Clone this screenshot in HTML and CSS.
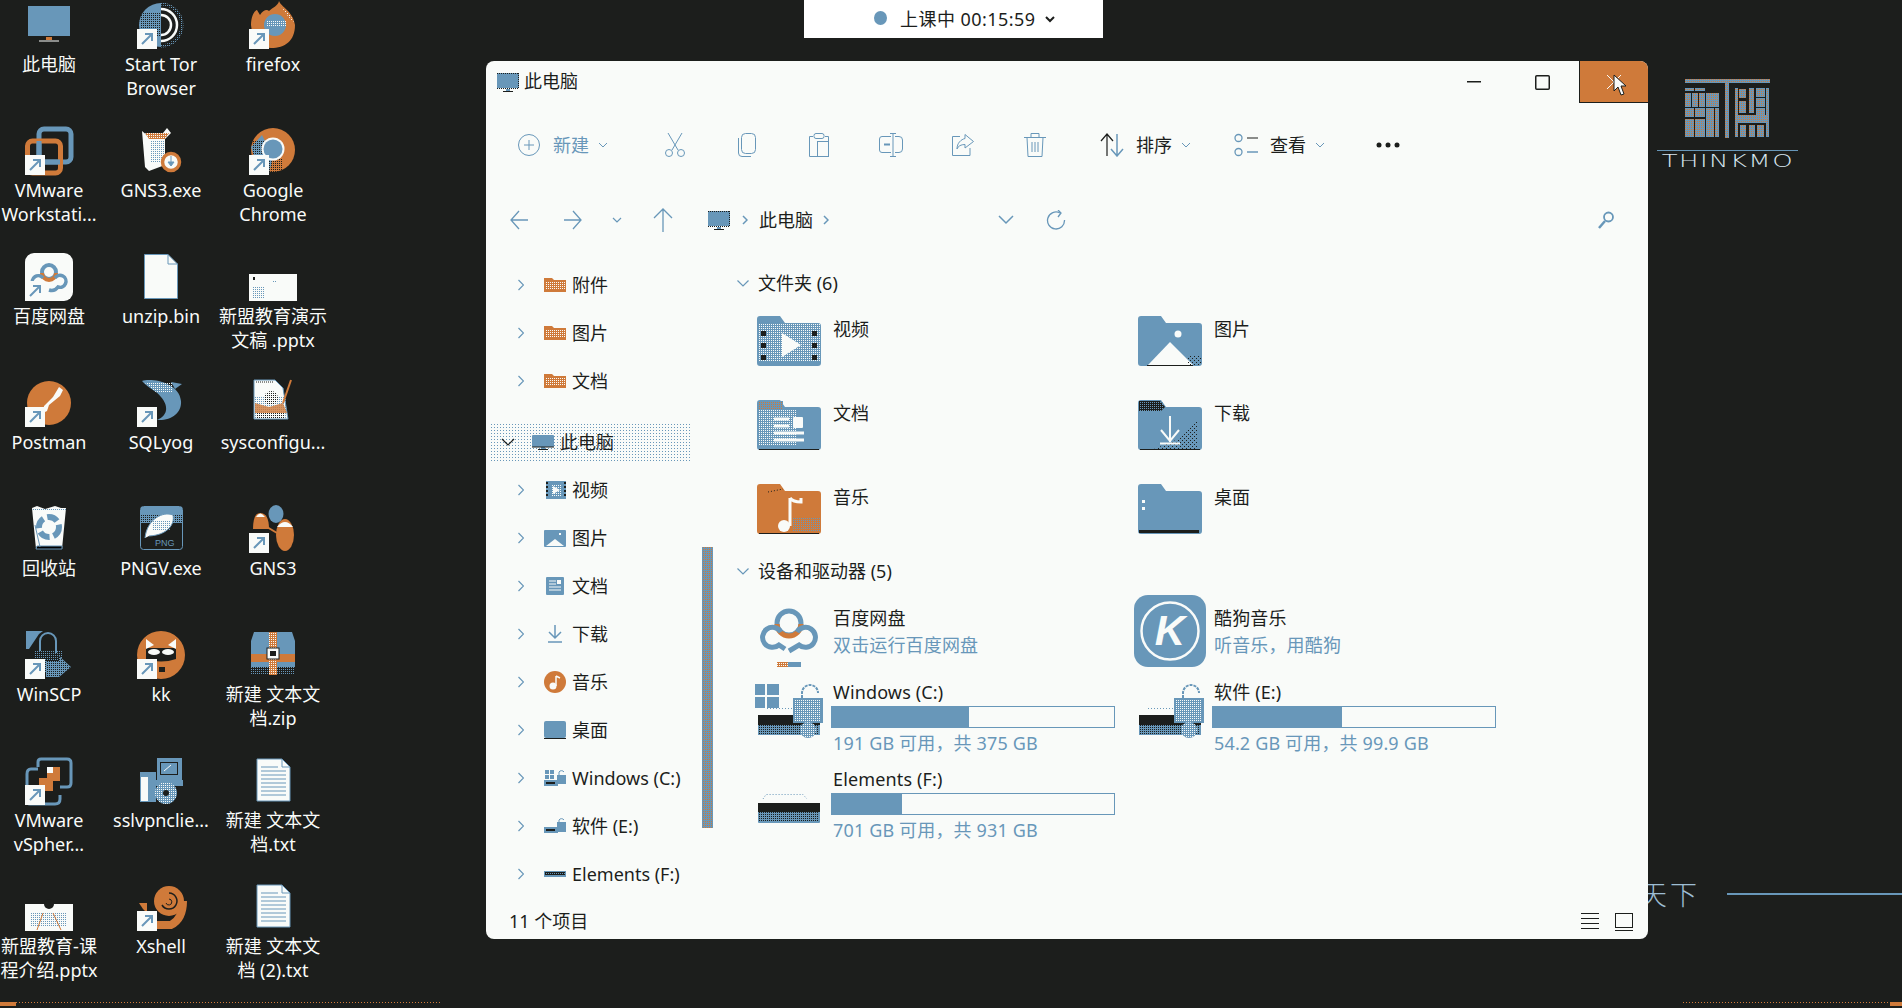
FILE: index.html
```html
<!DOCTYPE html>
<html lang="zh">
<head>
<meta charset="utf-8">
<title>此电脑</title>
<link rel="stylesheet" href="styles.css">
</head>
<body>
<svg class="defs" width="0" height="0" aria-hidden="true">
  <defs>
    <pattern id="dw" width="2" height="2" patternUnits="userSpaceOnUse"><rect width="1" height="1" fill="#f9fbf9"/></pattern>
    <pattern id="dd" width="2" height="2" patternUnits="userSpaceOnUse"><rect width="1" height="1" fill="#1c1e1c"/></pattern>
    <pattern id="dd3" width="4" height="4" patternUnits="userSpaceOnUse"><rect width="1" height="1" fill="#1c1e1c"/><rect x="2" y="2" width="1" height="1" fill="#1c1e1c"/></pattern>
    <pattern id="db" width="2" height="2" patternUnits="userSpaceOnUse"><rect width="1" height="1" fill="#6897b9"/></pattern>
    <pattern id="chk" width="2" height="2" patternUnits="userSpaceOnUse"><rect width="2" height="2" fill="#6897b9"/><rect width="1" height="1" fill="#cf7a3a"/></pattern>
    <pattern id="ow" width="2" height="2" patternUnits="userSpaceOnUse"><rect width="2" height="2" fill="#cf7a3a"/><rect width="1" height="1" fill="#f9fbf9"/></pattern>
    <path id="fs" d="M0 3a3 3 0 0 1 3-3h20l5 7h33a3 3 0 0 1 3 3v37a3 3 0 0 1-3 3H3a3 3 0 0 1-3-3z"/>
    <g id="badge">
      <rect x="0" y="28" width="20" height="20" fill="#f9fbf9"/>
      <path d="M5 43 15 33M8 33h7v7" fill="none" stroke="#6897b9" stroke-width="2"/>
    </g>
    <g id="txt">
      <path d="M8 0H33L41 8V42H8z" fill="#f9fbf9" stroke="#6897b9"/>
      <path d="M33 0V8H41" fill="none" stroke="#6897b9"/>
      <path d="M12 8H29M12 12H37M12 16H37M12 20H37M12 24H37M12 28H37M12 32H37M12 36H37" stroke="#6897b9"/>
    </g>
    <g id="lockdrive">
      <path d="M47 22V17a8 8 0 0 1 16 0" fill="none" stroke="#6897b9" stroke-width="2" stroke-dasharray="3 1"/>
      <rect x="38" y="22" width="30" height="25" fill="#6897b9"/>
      <rect x="40" y="24" width="26" height="21" fill="url(#dw)"/>
      <circle cx="53" cy="54" r="8" fill="#6897b9"/>
      <circle cx="53" cy="54" r="8" fill="url(#dw)"/>
    </g>
  </defs>
</svg>

<div class="topbar"><span class="rec-dot"></span><span>上课中 00:15:59</span>
  <svg class="topchev" width="10" height="7" viewBox="0 0 10 7"><path d="M1 1 5 5 9 1" fill="none" stroke="#1c1e1c" stroke-width="2"/></svg>
</div>

<main class="desktop">
  <div class="dicon"><svg viewBox="0 0 48 48"><rect x="3" y="5" width="42" height="30" fill="#6897b9"/><rect x="3" y="5" width="42" height="1" fill="url(#dd)"/><rect x="21" y="36" width="6" height="3" fill="#cf7a3a"/><path d="M14 40H34" stroke="#f9fbf9"/></svg><span>此电脑</span></div>
  <div class="dicon"><svg viewBox="0 0 48 48"><circle cx="24" cy="24" r="22" fill="#6897b9"/><path d="M2 12H24V36H4z" fill="url(#dd)"/><path d="M24 2A22 22 0 0 1 24 46z" fill="#1c1e1c"/><path d="M24 3A21 21 0 0 1 24 45" fill="none" stroke="url(#db)" stroke-width="3"/><path d="M24 8A16 16 0 0 1 24 40M24 14A10 10 0 0 1 24 34" fill="none" stroke="#f9fbf9" stroke-width="2.500"/><use href="#badge"/></svg><span>Start Tor<br>Browser</span></div>
  <div class="dicon"><svg viewBox="0 0 48 48"><path d="M30 0C32 6 44 10 46 24C46 40 36 47 22 47C10 47 3 36 2 24C2 16 5 10 8 9L11 14C14 9 18 8 20 10C24 6 29 5 30 0z" fill="#cf7a3a"/><path d="M30 2C32 7 42 11 45 22L38 14z" fill="url(#dw)"/><circle cx="26" cy="24" r="11" fill="#6897b9"/><path d="M18 20H38V26H18z" fill="url(#dw)"/><use href="#badge"/></svg><span>firefox</span></div>

  <div class="dicon"><svg viewBox="0 0 48 48"><rect x="14" y="2" width="32" height="33" rx="5" fill="none" stroke="#6897b9" stroke-width="5"/><rect x="2.500" y="14" width="33" height="32" rx="5" fill="none" stroke="#cf7a3a" stroke-width="5"/><path d="M14 14V35H35" fill="none" stroke="#6897b9" stroke-width="5"/><use href="#badge"/></svg><span>VMware<br>Workstati...</span></div>
  <div class="dicon"><svg viewBox="0 0 48 48"><path d="M5 4 12 10 26 6 30 1 34 6 28 12V38L12 44 8 40z" fill="#f9fbf9"/><path d="M8 6 32 6 28 12 12 12z" fill="url(#ow)"/><path d="M14 14H28V36H14z" fill="url(#db)"/><circle cx="34" cy="35" r="8.500" fill="#f9fbf9" stroke="#cf7a3a" stroke-width="3.500"/><path d="M34 29V37M31 35H37L34 39z" stroke="#6897b9" fill="#6897b9"/></svg><span>GNS3.exe</span></div>
  <div class="dicon"><svg viewBox="0 0 48 48"><circle cx="24" cy="23" r="22" fill="#cf7a3a"/><path d="M2 20 13 8 24 30 20 46 8 38z" fill="#6897b9"/><path d="M3 14H20V30H3z" fill="url(#dd)"/><path d="M20 32H34V45H20z" fill="url(#dd)"/><circle cx="24" cy="22" r="11.500" fill="#f9fbf9"/><circle cx="24" cy="22" r="9.500" fill="#6897b9"/><use href="#badge"/></svg><span>Google<br>Chrome</span></div>

  <div class="dicon"><svg viewBox="0 0 48 48"><rect width="48" height="48" rx="9" fill="#f9fbf9"/><circle cx="24" cy="19" r="7" fill="none" stroke="#6897b9" stroke-width="4"/><path d="M17 20a7 7 0 0 0 14 0" fill="none" stroke="#cf7a3a" stroke-width="4"/><path d="M18 25a6 6 0 1 0-2 9M30 25a6 6 0 1 1 3 9 8 8 0 0 1-9 3" fill="none" stroke="#6897b9" stroke-width="3.500"/><use href="#badge"/></svg><span>百度网盘</span></div>
  <div class="dicon"><svg viewBox="0 0 48 48"><path d="M7.500 1.500H31L40.500 11V45.500H7.500z" fill="#f9fbf9" stroke="#6897b9"/><path d="M31 1.500V11H40.500" fill="none" stroke="#6897b9"/></svg><span>unzip.bin</span></div>
  <div class="dicon"><svg viewBox="0 0 48 48"><rect y="21" width="48" height="27" fill="#f9fbf9"/><rect x="4" y="24" width="2" height="3" fill="#1c1e1c"/><rect x="24" y="28" width="4" height="1" fill="url(#db)"/><rect x="4" y="33" width="12" height="12" fill="url(#db)"/></svg><span>新盟教育演示<br>文稿 .pptx</span></div>

  <div class="dicon"><svg viewBox="0 0 48 48"><circle cx="24" cy="24" r="22" fill="#cf7a3a"/><path d="M34 8 38 11 35 17 24 26 22 32 18 34 19 27 28 18z" fill="#f9fbf9"/><use href="#badge"/></svg><span>Postman</span></div>
  <div class="dicon"><svg viewBox="0 0 48 48"><path d="M5 2C14 -1 42 3 44 22C45 34 34 42 20 41C32 36 31 26 24 18C20 12 12 10 5 2z" fill="#6897b9"/><path d="M8 4H36V14H20z" fill="url(#dw)"/><path d="M34 3 45 5 38 10z" fill="#6897b9"/><use href="#badge"/></svg><span>SQLyog</span></div>
  <div class="dicon"><svg viewBox="0 0 48 48"><path d="M5 1H26L34 9 39 40H5z" fill="#f9fbf9" stroke="#6897b9"/><path d="M7 3H25" stroke="#1c1e1c" stroke-dasharray="1 1"/><path d="M6 18H38V40H6z" fill="url(#db)"/><circle cx="22" cy="19" r="7" fill="url(#dd)"/><path d="M6 24 20 28 34 24 38 34H6z" fill="#cf7a3a" opacity=".8"/><path d="M8 34H36V39H8z" fill="url(#dd)"/><path d="M34 24 42 1" stroke="#cf7a3a" stroke-width="2"/></svg><span>sysconfigu...</span></div>

  <div class="dicon"><svg viewBox="0 0 48 48"><path d="M7 3 12 1 20 4 30 1 36 3 41 3 37 44H11z" fill="#f9fbf9"/><path d="M12 41H37L37 44H11zM10 20 15 42" stroke="#6897b9"/><circle cx="24" cy="22" r="10" fill="none" stroke="#6897b9" stroke-width="6" stroke-dasharray="11 4"/><path d="M7 3H41V6H7z" fill="url(#db)"/></svg><span>回收站</span></div>
  <div class="dicon"><svg viewBox="0 0 48 48"><rect x="3.500" y="1.500" width="42" height="43" rx="3" fill="#1c1e1c" stroke="#6897b9"/><rect x="4" y="2" width="41" height="16" fill="#6897b9"/><rect x="4" y="10" width="41" height="12" fill="url(#dd)"/><path d="M8 33C10 14 26 6 36 10C38 20 30 30 12 31" fill="#f9fbf9" stroke="#6897b9"/><path d="M16 16H34V26H16z" fill="url(#db)"/><text class="png" x="18" y="41">PNG</text></svg><span>PNGV.exe</span></div>
  <div class="dicon"><svg viewBox="0 0 48 48"><ellipse cx="27" cy="9" rx="7.500" ry="9" fill="#6897b9"/><path d="M4 24Q4 8 11 8Q20 8 20 24z" fill="#cf7a3a"/><path d="M7 12Q11 5 16 12z" fill="#f9fbf9"/><ellipse cx="36" cy="30" rx="9" ry="16" fill="#cf7a3a"/><path d="M28 22Q36 12 44 22z" fill="#f9fbf9"/><path d="M18 22 28 28" stroke="#cf7a3a" stroke-width="2"/><use href="#badge"/></svg><span>GNS3</span></div>

  <div class="dicon"><svg viewBox="0 0 48 48"><path d="M1 0H18L14 3 4 18H1z" fill="#6897b9"/><path d="M15 20V10a8 8 0 0 1 16 0V22" fill="none" stroke="#6897b9" stroke-width="2"/><rect x="10" y="20" width="28" height="22" fill="url(#db)"/><path d="M21 30H34V25L46 36 34 46H21z" fill="#6897b9"/><path d="M21 30H34V25L46 36 34 46H21z" fill="url(#dd)"/><use href="#badge"/></svg><span>WinSCP</span></div>
  <div class="dicon"><svg viewBox="0 0 48 48"><circle cx="24" cy="24" r="24" fill="#cf7a3a"/><path d="M9 17H39V28Q24 33 9 28z" fill="#1c1e1c"/><path d="M9 8 17 14 9 18zM39 8 31 14 39 18z" fill="#f9fbf9"/><ellipse cx="17" cy="21" rx="6" ry="3" fill="#f9fbf9"/><ellipse cx="31" cy="21" rx="6" ry="3" fill="#f9fbf9"/><path d="M22 36 28 36 28 41 22 41z" fill="#1c1e1c"/><use href="#badge"/></svg><span>kk</span></div>
  <div class="dicon"><svg viewBox="0 0 48 48"><path d="M5 1H43L46 10V23H2V10z" fill="#6897b9"/><rect x="2" y="23" width="44" height="8" fill="#cf7a3a"/><rect x="2" y="31" width="44" height="5" fill="#6897b9"/><rect x="2" y="36" width="44" height="8" fill="url(#db)"/><rect x="20" y="1" width="8" height="16" fill="url(#ow)"/><rect x="20" y="28" width="8" height="16" fill="url(#ow)"/><rect x="18" y="17" width="12" height="11" fill="#f9fbf9" stroke="#1c1e1c"/><rect x="21" y="20" width="6" height="5" fill="#1c1e1c"/></svg><span>新建 文本文<br>档.zip</span></div>

  <div class="dicon"><svg viewBox="0 0 48 48"><path d="M13 10V5Q13 2 16 2H42Q46 2 46 6V26Q46 30 42 30H35M35 38V42Q35 47 30 47H5Q2 47 2 43V17Q2 12 6 12H13" fill="none" stroke="#6897b9" stroke-width="3"/><path d="M22 10H35V24H28V34H14V21H22z" fill="#cf7a3a"/><path d="M22 10H28V16H22z" fill="#f9fbf9"/><use href="#badge"/></svg><span>VMware<br>vSpher...</span></div>
  <div class="dicon"><svg viewBox="0 0 48 48"><rect x="20" y="1" width="25" height="22" fill="#6897b9"/><rect x="23" y="5" width="18" height="13" fill="#1c1e1c"/><rect x="24" y="6" width="16" height="11" fill="#6897b9"/><path d="M27 14 34 8" stroke="#f9fbf9"/><path d="M18 23H46V29H18z" fill="#6897b9"/><rect x="3" y="15" width="16" height="30" fill="#6897b9"/><rect x="4" y="20" width="7" height="24" fill="#f9fbf9"/><circle cx="29" cy="36" r="11" fill="#6897b9"/><circle cx="29" cy="36" r="11" fill="url(#dw)"/><circle cx="29" cy="36" r="3" fill="#1c1e1c"/></svg><span>sslvpnclie...</span></div>
  <div class="dicon"><svg viewBox="0 0 48 48"><use href="#txt" y="2"/></svg><span>新建 文本文<br>档.txt</span></div>

  <div class="dicon"><svg viewBox="0 0 48 48"><rect y="21" width="48" height="27" fill="#f9fbf9"/><circle cx="24" cy="21" r="5" fill="#1c1e1c"/><rect x="6" y="29" width="36" height="15" fill="url(#db)"/><path d="M18 30 12 47M28 30 36 47" stroke="#cf7a3a"/></svg><span>新盟教育-课<br>程介绍.pptx</span></div>
  <div class="dicon"><svg viewBox="0 0 48 48"><path d="M2 20H10V30L6 26z" fill="#cf7a3a"/><circle cx="32" cy="18" r="15" fill="#cf7a3a"/><path d="M6 42H34Q46 36 46 18" fill="none" stroke="#cf7a3a" stroke-width="8"/><path d="M32 10a8 8 0 1 1-7 12" fill="none" stroke="#1c1e1c" stroke-width="1.500"/><path d="M32 16a3 3 0 1 1-3 4" fill="none" stroke="#1c1e1c"/><use href="#badge"/></svg><span>Xshell</span></div>
  <div class="dicon"><svg viewBox="0 0 48 48"><use href="#txt" y="2"/></svg><span>新建 文本文<br>档 (2).txt</span></div>
</main>

<div class="logo">
  <svg width="85" height="60" viewBox="0 0 85 60">
    <g fill="url(#chk)">
      <rect width="85" height="4"/><rect x="40" y="4" width="4" height="55"/>
      <rect y="9" width="9" height="3"/><rect x="10" y="9" width="10" height="3"/>
      <rect y="14" width="6" height="14"/><rect x="7" y="14" width="6" height="14"/><rect x="14" y="14" width="6" height="14"/><rect x="21" y="14" width="13" height="14"/>
      <rect y="29" width="9" height="9"/><rect x="10" y="29" width="10" height="9"/>
      <rect x="21" y="29" width="8" height="29"/><rect x="30" y="29" width="4" height="29"/>
      <rect y="40" width="9" height="18"/><rect x="10" y="40" width="10" height="18"/>
      <rect x="50" y="9" width="3" height="49"/><rect x="54" y="10" width="7" height="9"/><rect x="54" y="22" width="7" height="12"/>
      <rect x="64" y="9" width="5" height="25"/><rect x="71" y="9" width="9" height="9"/><rect x="71" y="19" width="9" height="9"/><rect x="71" y="29" width="9" height="7"/>
      <rect x="81" y="9" width="3" height="49"/><rect x="50" y="36" width="34" height="8"/>
      <rect x="55" y="46" width="6" height="12"/><rect x="64" y="46" width="6" height="12"/><rect x="72" y="46" width="7" height="12"/>
    </g>
  </svg>
  <div class="logo-rule"></div>
  <div class="logo-name">THINKMO</div>
</div>

<div class="hand">天下</div>
<div class="hand-line"></div>
<div class="prog-l"></div><div class="prog-dots-l"></div>
<div class="prog-dots-r"></div><div class="prog-r"></div>

<section class="win">
  <header class="titlebar">
    <svg class="ti" width="22" height="19" viewBox="0 0 22 19"><rect x="0" y="0" width="22" height="15" fill="#6897b9"/><path d="M0 .5H22M21.500 0V15M0 15.500H22" stroke="#1c1e1c" stroke-dasharray="1 1"/><path d="M9 16H13V18H9z" fill="#6897b9"/><path d="M6 18.500H16" stroke="#1c1e1c"/></svg>
    <span class="ttext">此电脑</span>
    <div class="controls">
      <div class="ctl"><svg width="14" height="2" viewBox="0 0 14 2"><rect width="14" height="1.500" fill="#1c1e1c"/></svg></div>
      <div class="ctl"><svg width="15" height="15" viewBox="0 0 15 15"><rect x=".75" y=".75" width="13.500" height="13.500" rx="1" fill="none" stroke="#1c1e1c" stroke-width="1.500"/></svg></div>
      <div class="ctl close"><svg width="16" height="16" viewBox="0 0 16 16"><path d="M1 1 15 15M15 1 1 15" stroke="#f9fbf9"/></svg>
        <svg class="cursor" width="14" height="22" viewBox="0 0 14 22"><path d="M1 1V17L5 13 8 21 11 20 8 12H13z" fill="#f9fbf9" stroke="#1c1e1c"/></svg></div>
    </div>
  </header>

  <div class="toolbar">
    <div class="tnew">
      <svg width="22" height="22" viewBox="0 0 22 22"><circle cx="11" cy="11" r="10.500" fill="none" stroke="#6897b9"/><path d="M11 6V16M6 11H16" stroke="#6897b9"/></svg>
      <span class="tdis">新建</span>
      <svg class="chev9" width="10" height="6" viewBox="0 0 10 6"><path d="M1 1 5 5 9 1" fill="none" stroke="#6897b9"/></svg>
    </div>
    <div class="tbtn"><svg width="22" height="24" viewBox="0 0 22 24"><path d="M4 0 14 17M18 0 8 17" stroke="#6897b9" fill="none"/><circle cx="5" cy="20" r="3.500" fill="none" stroke="#6897b9"/><circle cx="17" cy="20" r="3.500" fill="none" stroke="#6897b9"/></svg></div>
    <div class="tbtn"><svg width="18" height="24" viewBox="0 0 18 24"><rect x="3.500" y=".5" width="14" height="20" rx="4" fill="none" stroke="#6897b9"/><path d="M.5 5V20a3.500 3.500 0 0 0 3.500 3.500H13" fill="none" stroke="#6897b9"/></svg></div>
    <div class="tbtn"><svg width="20" height="24" viewBox="0 0 20 24"><path d="M4 3.500H.5V23.500H8M16 3.500H19.500V8" fill="none" stroke="#6897b9"/><rect x="5" y=".5" width="10" height="5" rx="2" fill="none" stroke="#6897b9"/><rect x="8.500" y="8.500" width="11" height="15" fill="none" stroke="#6897b9"/></svg></div>
    <div class="tbtn"><svg width="24" height="24" viewBox="0 0 24 24"><path d="M12 3.500H3a2.500 2.500 0 0 0-2.500 2.500V17A2.500 2.500 0 0 0 3 19.500H12M16 3.500H20A3.500 3.500 0 0 1 23.500 7V16A3.500 3.500 0 0 1 20 19.500H16M14 .5V23.500M11 .5H17M11 23.500H17" fill="none" stroke="#6897b9"/><path d="M5 11.500H11" stroke="#6897b9" stroke-width="2"/></svg></div>
    <div class="tbtn"><svg width="22" height="22" viewBox="0 0 22 22"><path d="M8 2.500H.5V21.500H18V14" fill="none" stroke="#6897b9"/><path d="M13 .5 21.500 7.500 13 14V10.500C9 10.500 6 12 5 15 5 9 9 5.500 13 4.500z" fill="none" stroke="#6897b9"/></svg></div>
    <div class="tbtn"><svg width="22" height="24" viewBox="0 0 22 24"><path d="M0 4.500H22M7 4.500V.5H15V4.500M3 4.500 4 23.500H18L19 4.500M8 9V19M11 9V19M14 9V19" fill="none" stroke="#6897b9"/></svg></div>
    <div class="tsort">
      <svg width="24" height="24" viewBox="0 0 24 24"><path d="M7 23V1M1 8 7 1 13 8" fill="none" stroke="#1c1e1c" stroke-width="1.200"/><path d="M17 1V23M11 16 17 23 23 16" fill="none" stroke="#6897b9" stroke-width="1.500"/></svg>
      <span>排序</span>
      <svg class="chev9" width="10" height="6" viewBox="0 0 10 6"><path d="M1 1 5 5 9 1" fill="none" stroke="#6897b9"/></svg>
    </div>
    <div class="tview">
      <svg width="24" height="24" viewBox="0 0 24 24"><circle cx="4.500" cy="5" r="3.500" fill="none" stroke="#6897b9" stroke-width="1.300"/><circle cx="4.500" cy="19" r="3.500" fill="none" stroke="#6897b9" stroke-width="1.300"/><path d="M13 5H24" stroke="#1c1e1c" stroke-width="1.200"/><path d="M13 19H24" stroke="#6897b9" stroke-width="1.500"/></svg>
      <span>查看</span>
      <svg class="chev9" width="10" height="6" viewBox="0 0 10 6"><path d="M1 1 5 5 9 1" fill="none" stroke="#6897b9"/></svg>
    </div>
    <svg class="tmore" width="24" height="6" viewBox="0 0 24 6"><circle cx="3" cy="3" r="2.500" fill="#1c1e1c"/><circle cx="12" cy="3" r="2.500" fill="#1c1e1c"/><circle cx="21" cy="3" r="2.500" fill="#1c1e1c"/></svg>
  </div>

  <nav class="navbar">
    <svg class="n-back" width="18" height="20" viewBox="0 0 18 20"><path d="M18 10H1M9 1 1 10 9 19" fill="none" stroke="#6897b9" stroke-width="1.300"/></svg>
    <svg class="n-fwd" width="18" height="20" viewBox="0 0 18 20"><path d="M0 10H17M9 1 17 10 9 19" fill="none" stroke="#6897b9" stroke-width="1.300"/></svg>
    <svg class="n-drop" width="10" height="6" viewBox="0 0 10 6"><path d="M1 1 5 5 9 1" fill="none" stroke="#6897b9" stroke-width="1.200"/></svg>
    <svg class="n-up" width="20" height="24" viewBox="0 0 20 24"><path d="M10 24V1M1 10 10 1 19 10" fill="none" stroke="#6897b9" stroke-width="1.300"/></svg>
    <svg class="n-pc" width="22" height="19" viewBox="0 0 22 19"><rect width="22" height="15" fill="#6897b9"/><path d="M0 .5H22M21.500 0V15M0 15.500H22" stroke="#1c1e1c" stroke-dasharray="1 1"/><path d="M9 16H13V18H9z" fill="#6897b9"/><path d="M6 18.500H16" stroke="#1c1e1c"/></svg>
    <svg class="n-sep" width="6" height="10" viewBox="0 0 6 10"><path d="M1 1 5 5 1 9" fill="none" stroke="#6897b9" stroke-width="1.500"/></svg>
    <span class="n-text">此电脑</span>
    <svg class="n-sep2" width="6" height="10" viewBox="0 0 6 10"><path d="M1 1 5 5 1 9" fill="none" stroke="#6897b9" stroke-width="1.500"/></svg>
    <svg class="n-hist" width="16" height="10" viewBox="0 0 16 10"><path d="M1 1 8 8 15 1" fill="none" stroke="#6897b9" stroke-width="1.500"/></svg>
    <svg class="n-ref" width="20" height="20" viewBox="0 0 20 20"><path d="M14 3A8.500 8.500 0 1 0 18.500 10" fill="none" stroke="#6897b9" stroke-width="1.300"/><path d="M12 0 15 3 12 7" fill="none" stroke="#6897b9" stroke-width="1.300"/></svg>
    <svg class="n-search" width="16" height="18" viewBox="0 0 16 18"><circle cx="10.500" cy="6" r="4.500" fill="none" stroke="#6897b9" stroke-width="1.800"/><path d="M7 10 1 17" stroke="#6897b9" stroke-width="2.500"/></svg>
  </nav>

  <div class="body">
    <aside class="side">
      <div class="srow"><svg class="sc" width="6" height="12" viewBox="0 0 6 12"><path d="M.5 1 5.500 6 .5 11" fill="none" stroke="#6897b9" stroke-width="1.200"/></svg><svg class="si" width="22" height="14" viewBox="0 0 22 14"><path d="M0 0H8L10 2H22V14H0z" fill="#cf7a3a"/><rect x="1" y="4" width="20" height="7" fill="url(#dw)"/></svg><span>附件</span></div>
      <div class="srow"><svg class="sc" width="6" height="12" viewBox="0 0 6 12"><path d="M.5 1 5.500 6 .5 11" fill="none" stroke="#6897b9" stroke-width="1.200"/></svg><svg class="si" width="22" height="14" viewBox="0 0 22 14"><path d="M0 0H8L10 2H22V14H0z" fill="#cf7a3a"/><rect x="1" y="4" width="20" height="7" fill="url(#dw)"/></svg><span>图片</span></div>
      <div class="srow"><svg class="sc" width="6" height="12" viewBox="0 0 6 12"><path d="M.5 1 5.500 6 .5 11" fill="none" stroke="#6897b9" stroke-width="1.200"/></svg><svg class="si" width="22" height="14" viewBox="0 0 22 14"><path d="M0 0H8L10 2H22V14H0z" fill="#cf7a3a"/><rect x="1" y="4" width="20" height="7" fill="url(#dw)"/></svg><span>文档</span></div>

      <div class="srow spc"><svg class="sd" width="14" height="8" viewBox="0 0 14 8"><path d="M1 1 7 7 13 1" fill="none" stroke="#1c1e1c" stroke-width="1.200"/></svg><svg class="si2" width="22" height="15" viewBox="0 0 22 15"><rect width="22" height="12" rx="1" fill="#6897b9"/><path d="M9 12H13V14H9z" fill="#6897b9"/><path d="M6 14.500H16M0 12H22" stroke="#1c1e1c"/></svg><span>此电脑</span></div>

      <div class="srow"><svg class="sc" width="6" height="12" viewBox="0 0 6 12"><path d="M.5 1 5.500 6 .5 11" fill="none" stroke="#6897b9" stroke-width="1.200"/></svg><svg class="si" width="22" height="18" viewBox="0 0 22 18"><rect x="2" width="20" height="18" fill="#6897b9"/><path d="M3 1V17M21 1V17" stroke="#1c1e1c" stroke-width="2" stroke-dasharray="2 2"/><path d="M7 3H17V15H7z" fill="url(#dw)"/><path d="M9 5 16 9 9 13z" fill="#f9fbf9"/></svg><span>视频</span></div>
      <div class="srow"><svg class="sc" width="6" height="12" viewBox="0 0 6 12"><path d="M.5 1 5.500 6 .5 11" fill="none" stroke="#6897b9" stroke-width="1.200"/></svg><svg class="si" width="22" height="17" viewBox="0 0 22 17"><rect width="22" height="17" rx="1" fill="#6897b9"/><path d="M2 16 11 9 20 16z" fill="#f9fbf9"/><rect x="15" y="3" width="2" height="2" fill="#f9fbf9"/></svg><span>图片</span></div>
      <div class="srow"><svg class="sc" width="6" height="12" viewBox="0 0 6 12"><path d="M.5 1 5.500 6 .5 11" fill="none" stroke="#6897b9" stroke-width="1.200"/></svg><svg class="si" width="22" height="18" viewBox="0 0 22 18"><rect x="2" width="18" height="18" rx="1" fill="#6897b9"/><path d="M5 4H12M5 7H12M5 10H17M5 13H17" stroke="#f9fbf9"/><rect x="13" y="3" width="4" height="4" fill="#f9fbf9"/></svg><span>文档</span></div>
      <div class="srow"><svg class="sc" width="6" height="12" viewBox="0 0 6 12"><path d="M.5 1 5.500 6 .5 11" fill="none" stroke="#6897b9" stroke-width="1.200"/></svg><svg class="si" width="22" height="18" viewBox="0 0 22 18"><path d="M11 0V13M5 7 11 13 17 7M4 17H18" fill="none" stroke="#6897b9" stroke-width="1.500"/></svg><span>下载</span></div>
      <div class="srow"><svg class="sc" width="6" height="12" viewBox="0 0 6 12"><path d="M.5 1 5.500 6 .5 11" fill="none" stroke="#6897b9" stroke-width="1.200"/></svg><svg class="si" width="22" height="22" viewBox="0 0 22 22"><circle cx="11" cy="11" r="11" fill="#cf7a3a"/><path d="M12 5V15M12 5 16 7" stroke="#f9fbf9" stroke-width="1.500" fill="none"/><circle cx="9" cy="15" r="3.500" fill="#f9fbf9"/></svg><span>音乐</span></div>
      <div class="srow"><svg class="sc" width="6" height="12" viewBox="0 0 6 12"><path d="M.5 1 5.500 6 .5 11" fill="none" stroke="#6897b9" stroke-width="1.200"/></svg><svg class="si" width="22" height="18" viewBox="0 0 22 18"><rect width="22" height="17" rx="2" fill="#6897b9"/><path d="M0 17.500H22" stroke="#1c1e1c"/></svg><span>桌面</span></div>
      <div class="srow"><svg class="sc" width="6" height="12" viewBox="0 0 6 12"><path d="M.5 1 5.500 6 .5 11" fill="none" stroke="#6897b9" stroke-width="1.200"/></svg><svg class="si" width="22" height="18" viewBox="0 0 22 18"><path d="M1 1H5V5H1zM6 1H10V5H6zM1 6H5V10H1zM6 6H10V10H6z" fill="#6897b9"/><rect y="11" width="14" height="6" fill="#6897b9"/><rect x="2" y="13" width="9" height="2" fill="#1c1e1c"/><rect x="13" y="6" width="9" height="9" fill="#6897b9"/><path d="M15 6V3a3 3 0 0 1 5 0" fill="none" stroke="#6897b9"/></svg><span>Windows (C:)</span></div>
      <div class="srow"><svg class="sc" width="6" height="12" viewBox="0 0 6 12"><path d="M.5 1 5.500 6 .5 11" fill="none" stroke="#6897b9" stroke-width="1.200"/></svg><svg class="si" width="22" height="18" viewBox="0 0 22 18"><rect y="10" width="14" height="6" fill="#6897b9"/><rect x="2" y="12" width="9" height="2" fill="#1c1e1c"/><rect x="13" y="5" width="9" height="10" fill="#6897b9"/><path d="M15 5V3a3 3 0 0 1 5 0" fill="none" stroke="#6897b9"/></svg><span>软件 (E:)</span></div>
      <div class="srow"><svg class="sc" width="6" height="12" viewBox="0 0 6 12"><path d="M.5 1 5.500 6 .5 11" fill="none" stroke="#6897b9" stroke-width="1.200"/></svg><svg class="si" width="22" height="6" viewBox="0 0 22 6"><rect width="22" height="6" fill="#6897b9"/><rect x="1" y="1" width="20" height="3" fill="#1c1e1c"/><rect x="1" y="1" width="20" height="3" fill="url(#db)"/></svg><span>Elements (F:)</span></div>
      <div class="sbar"></div>
    </aside>

    <div class="content">
      <div class="sech"><svg width="12" height="7" viewBox="0 0 12 7"><path d="M.5 .5 6 6 11.500 .5" fill="none" stroke="#6897b9" stroke-width="1.200"/></svg><span>文件夹 (6)</span></div>
      <div class="folders">
        <div class="tile"><svg width="64" height="50" viewBox="0 0 64 50"><use href="#fs" fill="#6897b9"/><rect x="2" y="8" width="62" height="38" fill="url(#dw)"/><path d="M25 17 44 29 25 41z" fill="#f9fbf9"/><rect x="4" y="15" width="5" height="5" fill="#1c1e1c"/><rect x="4" y="27" width="5" height="5" fill="#1c1e1c"/><rect x="4" y="39" width="5" height="5" fill="#1c1e1c"/><rect x="55" y="15" width="5" height="5" fill="#1c1e1c"/><rect x="55" y="27" width="5" height="5" fill="#1c1e1c"/><rect x="55" y="39" width="5" height="5" fill="#1c1e1c"/></svg><span>视频</span></div>
        <div class="tile"><svg width="64" height="50" viewBox="0 0 64 50"><use href="#fs" fill="#6897b9"/><circle cx="40" cy="18" r="3.500" fill="#f9fbf9"/><path d="M10 49 32 26 55 49z" fill="#f9fbf9"/><path d="M50 40H64V49H50z" fill="url(#dd3)"/><path d="M9 49.500H55" stroke="#1c1e1c"/></svg><span>图片</span></div>
        <div class="tile"><svg width="64" height="50" viewBox="0 0 64 50"><use href="#fs" fill="#6897b9"/><rect x="1" y="1" width="25" height="8" fill="url(#chk)"/><rect x="2" y="9" width="38" height="37" fill="url(#dw)"/><rect x="36" y="17" width="10" height="11" rx="1" fill="#f9fbf9"/><path d="M17 19H32M17 26H32M17 33H47M17 40H47" stroke="#f9fbf9" stroke-width="3"/><path d="M2 49.500H62" stroke="#1c1e1c"/></svg><span>文档</span></div>
        <div class="tile"><svg width="64" height="50" viewBox="0 0 64 50"><use href="#fs" fill="#6897b9"/><path d="M1 1H22L27 7 23 11H1z" fill="#1c1e1c"/><rect x="1" y="1" width="25" height="10" fill="url(#db)"/><path d="M38 40 60 20V49H16z" fill="url(#dd3)"/><path d="M32 16V42M23 30 32 41 41 30M22 43.500H42" fill="none" stroke="#f9fbf9" stroke-width="2"/><path d="M2 49.500H62" stroke="#1c1e1c"/></svg><span>下载</span></div>
        <div class="tile"><svg width="64" height="50" viewBox="0 0 64 50"><use href="#fs" fill="#cf7a3a"/><path d="M36 34H64V48H36z" fill="url(#db)"/><path d="M11 8 26 5" stroke="#1c1e1c" stroke-dasharray="1 2"/><path d="M33 14V42M33 14Q36 18 44 18V14" fill="none" stroke="#f9fbf9" stroke-width="3"/><circle cx="27" cy="42" r="6" fill="#f9fbf9"/><path d="M2 49.500H62" stroke="#1c1e1c"/></svg><span>音乐</span></div>
        <div class="tile"><svg width="64" height="50" viewBox="0 0 64 50"><use href="#fs" fill="#6897b9"/><rect x="4" y="16" width="3" height="3" fill="#f9fbf9"/><rect x="4" y="23" width="3" height="3" fill="#f9fbf9"/><rect x="1" y="46" width="60" height="3" fill="#1c1e1c"/></svg><span>桌面</span></div>
      </div>

      <div class="sech sec2"><svg width="12" height="7" viewBox="0 0 12 7"><path d="M.5 .5 6 6 11.500 .5" fill="none" stroke="#6897b9" stroke-width="1.200"/></svg><span>设备和驱动器 (5)</span></div>
      <div class="drives">
        <div class="drive">
          <svg class="dr-i" width="72" height="72" viewBox="0 0 72 72"><circle cx="36" cy="28" r="12" fill="none" stroke="#6897b9" stroke-width="5"/><path d="M24 29a12 12 0 0 0 24 0" fill="none" stroke="#cf7a3a" stroke-width="5"/><path d="M28 37A10 10 0 1 0 26 50L32 54M44 37A10 10 0 1 1 46 50L36 56" fill="none" stroke="#6897b9" stroke-width="5"/><rect x="24" y="67" width="24" height="5" fill="#6897b9"/><rect x="24" y="67" width="11" height="5" fill="url(#ow)"/></svg>
          <div class="dr-t app"><div class="d1">百度网盘</div><div class="d2">双击运行百度网盘</div></div>
        </div>
        <div class="drive">
          <svg class="dr-i" width="72" height="72" viewBox="0 0 72 72"><rect width="72" height="72" rx="14" fill="#6897b9"/><circle cx="36" cy="36" r="28.500" fill="none" stroke="#f9fbf9" stroke-width="2.500"/><text class="kk" x="36" y="50" text-anchor="middle">K</text></svg>
          <div class="dr-t app"><div class="d1">酷狗音乐</div><div class="d2">听音乐，用酷狗</div></div>
        </div>
        <div class="drive">
          <svg class="dr-i" width="72" height="72" viewBox="0 0 72 72"><path d="M2 3H12V14H2zM14 3H26V14H14zM2 16H12V27H2zM14 16H26V27H14z" fill="#6897b9"/><rect x="5" y="34" width="62" height="20" fill="#6897b9"/><rect x="5" y="34" width="62" height="10" fill="#1c1e1c"/><rect x="6" y="44" width="60" height="9" fill="url(#dd)"/><path d="M14 27.500H39" stroke="#6897b9" stroke-dasharray="1 2"/><use href="#lockdrive" transform="translate(2,-5)"/></svg>
          <div class="dr-t"><div class="d1">Windows (C:)</div><div class="dbar"><div class="dfill" style="width:49%"></div></div><div class="d2">191 GB 可用，共 375 GB</div></div>
        </div>
        <div class="drive">
          <svg class="dr-i" width="72" height="72" viewBox="0 0 72 72"><rect x="5" y="34" width="62" height="20" fill="#6897b9"/><rect x="5" y="34" width="62" height="10" fill="#1c1e1c"/><rect x="6" y="44" width="60" height="9" fill="url(#dd)"/><path d="M14 27.500H39" stroke="#6897b9" stroke-dasharray="1 2"/><use href="#lockdrive" transform="translate(2,-5)"/></svg>
          <div class="dr-t"><div class="d1">软件 (E:)</div><div class="dbar"><div class="dfill" style="width:46%"></div></div><div class="d2">54.2 GB 可用，共 99.9 GB</div></div>
        </div>
        <div class="drive">
          <svg class="dr-i" width="72" height="72" viewBox="0 0 72 72"><rect x="5" y="35" width="62" height="20" rx="1" fill="#6897b9"/><rect x="5" y="35" width="62" height="9" fill="#1c1e1c"/><rect x="6" y="44" width="60" height="9" fill="url(#dd)"/><path d="M10 31 13 26.500H50L54 31" fill="none" stroke="#6897b9" stroke-dasharray="1 2"/></svg>
          <div class="dr-t"><div class="d1">Elements (F:)</div><div class="dbar"><div class="dfill" style="width:25%"></div></div><div class="d2">701 GB 可用，共 931 GB</div></div>
        </div>
      </div>
    </div>
  </div>

  <footer class="status">
    <span>11 个项目</span>
    <div class="views">
      <svg width="18" height="16" viewBox="0 0 18 16"><path d="M0 .5H18M0 5.500H18M0 10.500H18M0 15.500H18" stroke="#1c1e1c"/></svg>
      <svg width="18" height="18" viewBox="0 0 18 18"><rect x=".5" y=".5" width="17" height="14" fill="none" stroke="#1c1e1c"/><path d="M0 17.500H18" stroke="#1c1e1c"/></svg>
    </div>
  </footer>
</section>
</body>
</html>
```
FILE: styles.css
```css
* { box-sizing: border-box; }
html, body { margin: 0; height: 100%; }
body {
  width: 1902px;
  height: 1008px;
  overflow: hidden;
  position: relative;
  background: #1c1e1c;
  color: #1c1e1c;
  font-family: "Noto Sans", "Noto Sans CJK SC", sans-serif;
  font-size: 18px;
  line-height: 24px;
}
svg { display: block; flex: none; }
.defs { position: absolute; width: 0; height: 0; }

.topbar {
  position: absolute; left: 804px; top: 0; width: 299px; height: 38px;
  background: #fff;
  display: flex; align-items: center; padding-left: 70px;
  letter-spacing: .45px;
}
.rec-dot { width: 13px; height: 14px; border-radius: 50%; background: #6897b9; margin: 0 13px 2px 0; }
.topchev { margin-left: 9px; }

.desktop {
  margin-left: -7px;
  display: grid;
  grid-template-columns: repeat(3, 112px);
  grid-auto-rows: 126px;
  color: #f9fbf9;
}
.dicon { display: flex; flex-direction: column; align-items: center; padding-top: 1px; text-align: center; }
.dicon > svg { width: 48px; height: 48px; overflow: visible; }
.dicon > span { margin-top: 3px; width: 112px; white-space: nowrap; }
.png { font: 9px "Liberation Sans", sans-serif; fill: #6897b9; }

.logo { position: absolute; left: 1657px; top: 79px; width: 141px; display: flex; flex-direction: column; align-items: center; }
.logo-rule { width: 141px; height: 1px; background: #6897b9; margin-top: 11px; }
.logo-name {
  font-family: "DejaVu Sans", sans-serif; font-weight: 200; font-size: 18px; line-height: 18px;
  letter-spacing: 1px; color: #d8e6ef; margin-top: 1px; white-space: nowrap;
  transform: scaleX(1.44);
}
.hand { position: absolute; left: 1640px; top: 878px; font-size: 27px; line-height: 34px; letter-spacing: 3px; color: #9dbdd3; font-weight: 300; }
.hand-line { position: absolute; left: 1727px; top: 893px; width: 175px; height: 2px; background: #6897b9; }
.prog-l { position: absolute; left: 0; top: 1002px; width: 16px; height: 4px; background: #cf7a3a; }
.prog-r { position: absolute; left: 1890px; top: 1002px; width: 12px; height: 4px; background: #cf7a3a; }
.prog-dots-l, .prog-dots-r { position: absolute; top: 1002px; height: 1px; background: repeating-linear-gradient(90deg, #cf7a3a 0 1px, transparent 1px 3px); }
.prog-dots-l { left: 16px; width: 424px; }
.prog-dots-r { left: 1683px; width: 207px; }

.win {
  position: absolute; left: 486px; top: 61px; width: 1162px; height: 878px;
  background: #f9fbf9; border-radius: 8px; overflow: hidden;
  display: flex; flex-direction: column;
}
.titlebar { height: 42px; display: flex; align-items: center; padding-left: 11px; flex: none; }
.ttext { margin: 0 0 2px 5px; }
.controls { margin-left: auto; display: flex; height: 42px; }
.ctl { width: 68px; display: flex; align-items: center; justify-content: center; }
.close { width: 69px; margin-left: 3px; background: #cf7a3a; border-left: 1px solid #1c1e1c; border-bottom: 1px solid #1c1e1c; position: relative; }
.cursor { position: absolute; left: 33px; top: 13px; }

.toolbar { height: 84px; flex: none; display: flex; align-items: center; padding-left: 32px; }
.tnew { width: 121px; display: flex; align-items: center; }
.tdis { color: #6897b9; margin-left: 13px; }
.chev9 { margin-left: 9px; }
.tbtn { width: 72px; display: flex; justify-content: center; }
.tsort { margin-left: 29px; width: 134px; display: flex; align-items: center; }
.tview { width: 142px; display: flex; align-items: center; }
.tsort span, .tview span { margin-left: 12px; }
.tmore { flex: none; }

.navbar { height: 66px; flex: none; display: flex; align-items: center; padding: 0 34px 0 24px; }
.n-fwd { margin-left: 36px; }
.n-drop { margin-left: 30px; }
.n-up { margin-left: 31px; }
.n-pc { margin-left: 35px; }
.n-sep { margin-left: 12px; }
.n-sep2 { margin-left: 10px; }
.n-text { margin-left: 11px; }
.n-hist { margin-left: 169px; }
.n-ref { margin-left: 32px; }
.n-search { margin-left: auto; }

.body { flex: 1; display: flex; min-height: 0; }
.side { width: 239px; flex: none; padding-top: 8px; position: relative; }
.srow { height: 48px; display: flex; align-items: center; padding-left: 32px; }
.sc { margin-right: 20px; }
.si { margin-right: 6px; width: 22px; }
.spc {
  height: 38px; margin: 18px 0 5px 4px; width: 202px; padding-left: 11px;
  background: radial-gradient(#6897b9 .6px, transparent .8px) 0 0 / 3px 3px;
}
.sd { margin-right: 17px; }
.si2 { margin-right: 6px; }
.sbar {
  position: absolute; left: 216px; top: 294px; width: 11px; height: 281px;
  background: repeating-conic-gradient(#cf7a3a 0 25%, #6897b9 0 100%) 0 0 / 2px 2px;
}

.content { flex: 1; padding-top: 15px; min-width: 0; }
.sech { height: 30px; display: flex; align-items: center; padding-left: 12px; }
.sech span { margin-left: 9px; }
.folders { margin: 18px 0 0 32px; display: grid; grid-template-columns: 381px 381px; grid-auto-rows: 50px; row-gap: 34px; }
.tile { display: flex; align-items: flex-start; }
.tile span { margin: 1px 0 0 12px; }
.sec2 { margin-top: 22px; }
.drives { margin: 9px 0 0 28px; display: grid; grid-template-columns: 381px 381px; grid-auto-rows: auto; row-gap: 14px; }
.drive { display: flex; align-items: flex-start; }
.dr-i { margin-right: 8px; overflow: visible; }
.dr-t { line-height: 22px; width: 290px; letter-spacing: .15px; }
.app { padding-top: 12px; }
.app .d2 { margin-top: 5px; }
.d2 { color: #6897b9; margin-top: 4px; white-space: nowrap; }
.d1 { white-space: nowrap; }
.dbar { height: 22px; width: 284px; margin: 3px 0 0 -2px; border: 1px solid #6897b9; }
.dfill { background: #6897b9; margin: -1px 0 0 -1px; height: 22px; }
.kk { font: italic 700 42px "Liberation Sans", sans-serif; fill: #f9fbf9; }

.status { height: 36px; flex: none; display: flex; align-items: flex-start; padding: 6px 15px 0 23px; }
.views { margin-left: auto; display: flex; gap: 16px; padding-top: 4px; }
```
